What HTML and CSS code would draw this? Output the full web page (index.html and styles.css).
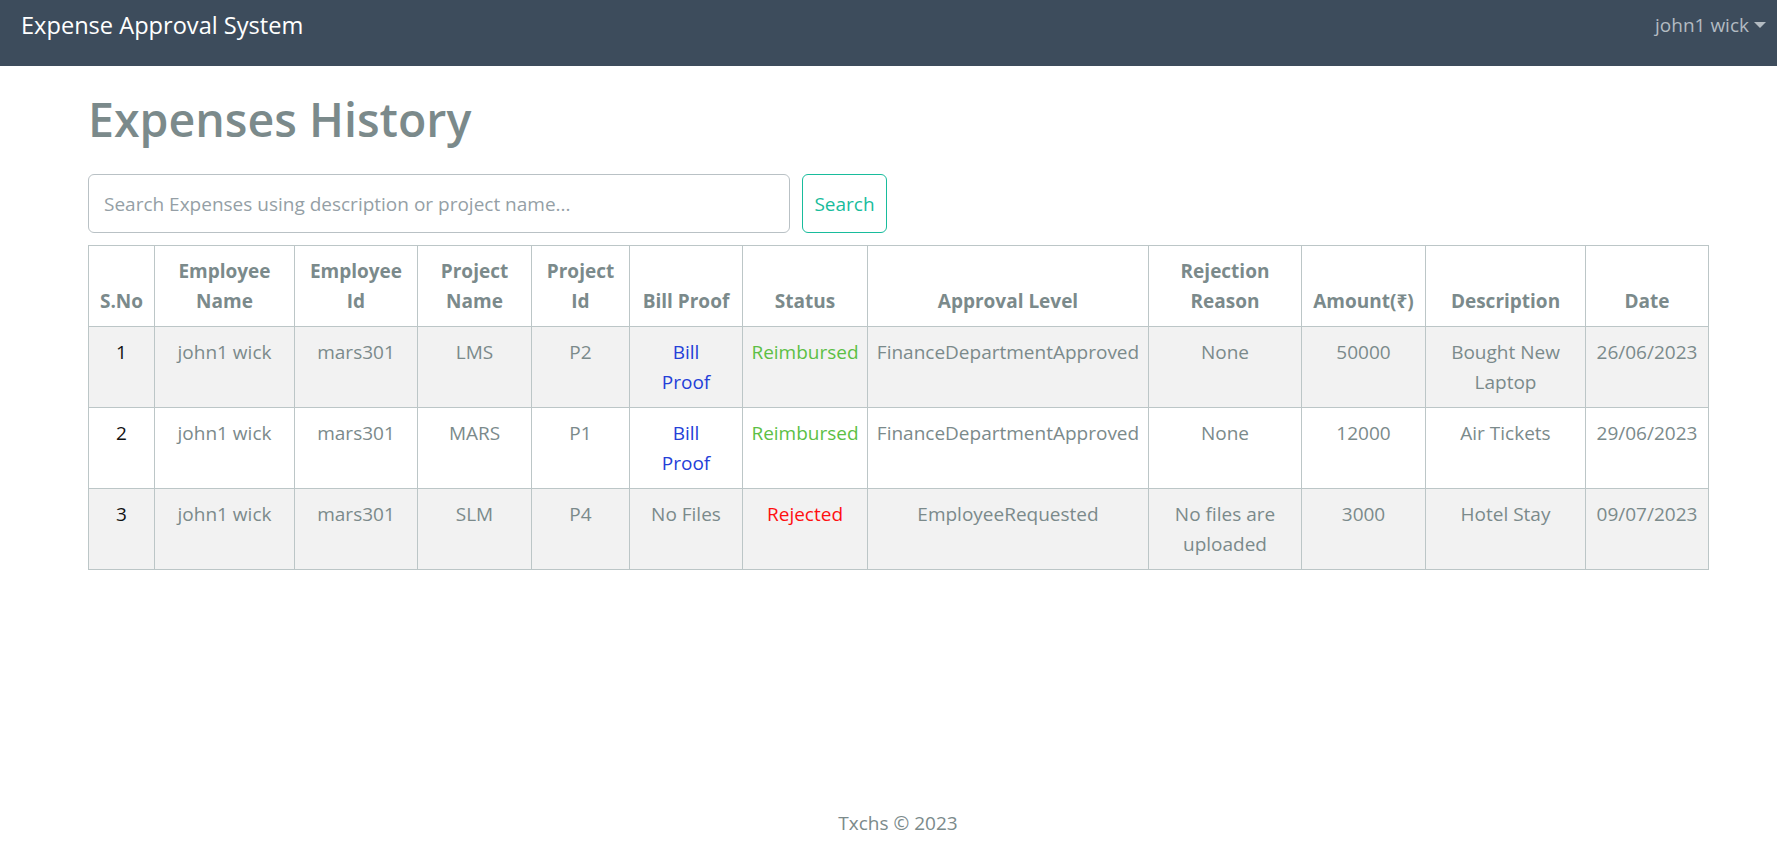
FILE: index.html
```html
<!DOCTYPE html>
<html lang="en">
<head>
<meta charset="utf-8">
<title>Expense Approval System</title>
<link rel="stylesheet" href="styles.css">
</head>
<body>
<nav class="navbar">
  <span class="brand">Expense Approval System</span>
  <span class="user">john1 wick<span class="caret"></span></span>
</nav>
<main class="container">
  <h1 class="title">Expenses History</h1>
  <form class="search">
    <input class="search-input" type="text" placeholder="Search Expenses using description or project name...">
    <button class="search-btn" type="button">Search</button>
  </form>
  <table class="table">
    <colgroup>
      <col class="c-sno"><col class="c-ename"><col class="c-eid"><col class="c-pname"><col class="c-pid"><col class="c-bill"><col class="c-status"><col class="c-level"><col class="c-reason"><col class="c-amount"><col class="c-desc"><col class="c-date">
    </colgroup>
    <thead>
      <tr>
        <th>S.No</th><th>Employee Name</th><th>Employee Id</th><th>Project Name</th><th>Project Id</th><th class="nowrap">Bill Proof</th><th>Status</th><th>Approval Level</th><th>Rejection Reason</th><th class="nowrap">Amount(₹)</th><th>Description</th><th>Date</th>
      </tr>
    </thead>
    <tbody>
      <tr>
        <td class="num">1</td><td>john1 wick</td><td>mars301</td><td>LMS</td><td>P2</td><td><a class="link" href="#">Bill<br>Proof</a></td><td class="ok">Reimbursed</td><td>FinanceDepartmentApproved</td><td>None</td><td>50000</td><td>Bought New Laptop</td><td>26/06/2023</td>
      </tr>
      <tr>
        <td class="num">2</td><td>john1 wick</td><td>mars301</td><td>MARS</td><td>P1</td><td><a class="link" href="#">Bill<br>Proof</a></td><td class="ok">Reimbursed</td><td>FinanceDepartmentApproved</td><td>None</td><td>12000</td><td>Air Tickets</td><td>29/06/2023</td>
      </tr>
      <tr>
        <td class="num">3</td><td>john1 wick</td><td>mars301</td><td>SLM</td><td>P4</td><td>No Files</td><td class="bad">Rejected</td><td>EmployeeRequested</td><td>No files are uploaded</td><td>3000</td><td>Hotel Stay</td><td>09/07/2023</td>
      </tr>
    </tbody>
  </table>
</main>
<footer class="footer">Txchs © 2023</footer>
</body>
</html>
```
FILE: styles.css
```css
* { box-sizing: border-box; }
html, body { height: 100%; }
body {
  margin: 0;
  font-family: "Open Sans", "Noto Sans", "Liberation Sans", sans-serif;
  font-size: 19px;
  line-height: 30px;
  color: #7b8a8b;
  background: #fff;
  display: flex;
  flex-direction: column;
  min-height: 100vh;
}
.navbar {
  height: 66px;
  flex: none;
  background: #3d4c5c;
  display: flex;
  align-items: center;
  justify-content: space-between;
  padding: 0 11px 0 21px;
}
.brand {
  color: #fff;
  font-size: 23.6px;
  line-height: 30px;
  margin-top: -16px;
}
.user {
  color: #b3bbc2;
  font-size: 19px;
  display: flex;
  align-items: center;
  margin-top: -16px;
}
.caret {
  display: inline-block;
  margin-left: 5px;
  width: 0;
  height: 0;
  border-left: 6px solid transparent;
  border-right: 6px solid transparent;
  border-top: 6px solid #b3bbc2;
}
.container {
  margin-left: 88px;
  width: 1620px;
  flex: 1 0 auto;
}
.title {
  margin: 24px 0 26px;
  font-size: 46.5px;
  line-height: 58px;
  font-weight: 600;
  color: #7b8a8b;
  padding-left: 0;
}
.search {
  display: flex;
  gap: 12px;
  margin: 0 0 12px;
}
.search-input {
  width: 702px;
  height: 59px;
  border: 1px solid #b9c1c5;
  border-radius: 6px;
  padding: 0 15px;
  font: inherit;
  color: #7b8a8b;
  outline: none;
}
.search-input::placeholder { color: #959fa6; }
.search-btn {
  width: 85px;
  height: 59px;
  border: 1px solid #18bc9c;
  border-radius: 6px;
  background: #fff;
  color: #18bc9c;
  font: inherit;
  padding: 0;
}
.table {
  width: 1620px;
  border-collapse: collapse;
  table-layout: fixed;
}
.c-sno { width: 66px; }
.c-ename { width: 140px; }
.c-eid { width: 123px; }
.c-pname { width: 114px; }
.c-pid { width: 98px; }
.c-bill { width: 113px; }
.c-status { width: 125px; }
.c-level { width: 281px; }
.c-reason { width: 153px; }
.c-amount { width: 124px; }
.c-desc { width: 160px; }
.c-date { width: 123px; }
.table th, .table td {
  border: 1px solid #bcc6c7;
  padding: 10px 8px;
  text-align: center;
  vertical-align: top;
}
.table th {
  vertical-align: bottom;
  font-weight: 700;
  color: #7b8a8b;
}
.table tbody tr:nth-child(odd) { background: #f2f2f2; }
.nowrap { white-space: nowrap; }
.num { color: #111; }
.link { color: #2440d8; text-decoration: none; }
.ok { color: #5cbf45; }
.bad { color: #ff1010; }
.footer {
  flex: none;
  width: 1620px;
  margin-left: 88px;
  text-align: center;
  padding: 10px 0;
  line-height: 30px;
  color: #7b8a8b;
}
```
